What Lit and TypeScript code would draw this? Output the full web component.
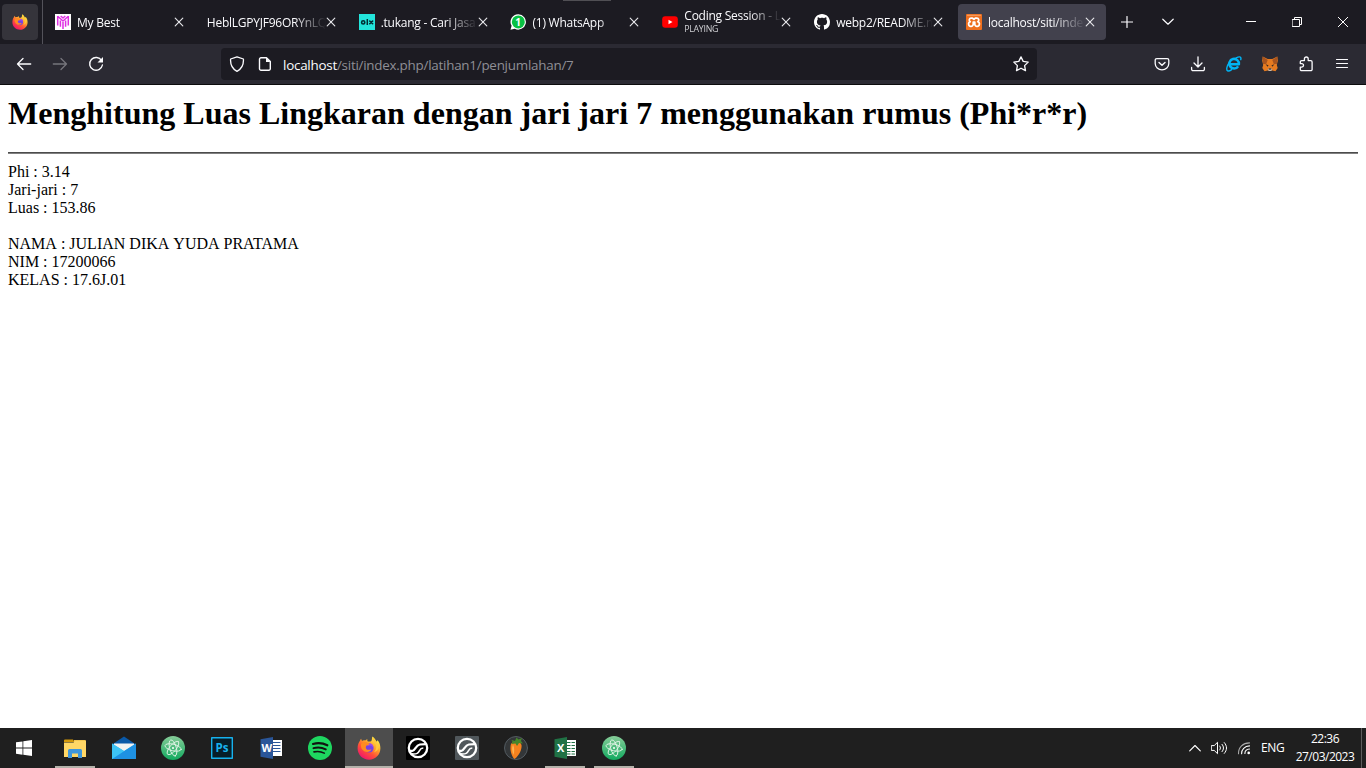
import { LitElement, html, svg, css, nothing, type TemplateResult } from "lit";
import { customElement } from "lit/decorators.js";
import { classMap } from "lit/directives/class-map.js";

const icon = (w: number, h: number, body: unknown, box = `0 0 ${w} ${h}`): TemplateResult =>
  html`<svg width=${w} height=${h} viewBox=${box} fill="none" stroke-linecap="round" stroke-linejoin="round">${body}</svg>`;

const firefox = (size: number, id: string) => icon(size, size, svg`
  <defs>
    <linearGradient id=${id} x1=".85" y1=".1" x2=".25" y2=".95">
      <stop offset="0" stop-color="#fff04a"/><stop offset=".35" stop-color="#ffa52b"/>
      <stop offset=".65" stop-color="#ff5038"/><stop offset="1" stop-color="#f0166b"/>
    </linearGradient>
  </defs>
  <path fill="url(#${id})" d="M15.5 .4c2.1 1.4 3.3 3.4 3.7 5.2 1-.2 1.2-.9 1.2-1.5 2.1 2.3 3 5.2 3 8.2 0 6.3-4.9 11.400-11.300 11.400S.600 18.700.600 12.500c0-3.200.900-5.900 2.500-7.900.200-.800.500-1.500 1-1.900l.900 2.300c1-.700 2-.800 3.100-.500l2.300-1.600c-.400 1-.100 2.100.700 2.700h2.300C15.500 4.500 14.500 2.500 15.500.4z"/>
  <circle cx="12" cy="12" r="4.600" fill="#7542e5"/>
  <path fill="#a04bea" d="M10 8c3-2 6.500 0 6.500 4-1-2-3-3-5-2z"/>
  <path fill="#ff8b22" d="M4 8c2-2 4-2.500 6-1.500l2.700 1.200c-.4 1.300-2 1.700-3.200 1.900-.700 1.200-1 2.100-.2 3.300 1.300 1.600 3.400.300 5.200.600-1 2.300-4.500 3.300-7.300 1.700C4.500 13.700 3.500 11 4 8z"/>
  <path fill="#ffc83a" d="M15.500 1c-.7 3 2.500 4.500 3.500 8 .8 3-.3 6-2.300 7.500C21 15 23 11 21.500 7.500l-1.200 1C19.700 5 17.500 3.500 15.500 1z"/>`, "0 0 24 24");

const atom = (id: string) => icon(24, 24, svg`
  <defs><linearGradient id=${id} x1="0" y1="0" x2="0" y2="1">
    <stop offset="0" stop-color="#86cc98"/><stop offset="1" stop-color="#12aa5f"/></linearGradient></defs>
  <circle cx="12" cy="12" r="12" fill="url(#${id})"/>
  <g stroke="#dff3e5" stroke-width=".9">
    <ellipse cx="12" cy="11.500" rx="8.300" ry="3.300" transform="rotate(14 12 12)"/>
    <ellipse cx="12" cy="12" rx="8.300" ry="3.300" transform="rotate(74 12 12)"/>
    <ellipse cx="12" cy="12" rx="8.300" ry="3.300" transform="rotate(-50 12 12)"/>
  </g><circle cx="12" cy="12" r="1" fill="#fff"/>`);

const swirl = (bg: string) => icon(24, 24, svg`
  <rect width="24" height="24" rx="1" fill=${bg}/>
  <circle cx="12" cy="12" r="9.200" stroke="#fff" stroke-width="2.300"/>
  <path d="M3.500 14.800h3c2.800 0 3.200-5.800 7.300-6.300l6.500-.3" stroke="#fff" stroke-width="2.200" stroke-linecap="butt"/>
  <path d="M6 17.900c5 .4 6.200-.8 7.500-3.300 1-1.900 1.800-2.500 3.800-2.600" stroke="#fff" stroke-width="1.600" stroke-linecap="butt"/>`);

const office = (colour: string, letter: string, rows: unknown) => icon(23, 22, svg`
  <path d="M11 3h11v16H11z" fill="#fff"/>${rows}
  <path d="M.500 2.200 13 0v22L.500 19.800z" fill=${colour}/>
  <text x="6.700" y="15" text-anchor="middle" font-family="Open Sans, sans-serif" font-weight="700" font-size="11" fill="#fff">${letter}</text>`);

const art = {
  back: () => icon(16, 16, svg`<path d="M14.700 8H1.500M7 2.500 1.500 8 7 13.500" stroke="#fbfbfe" stroke-width="1.300"/>`),
  forward: () => icon(16, 16, svg`<path d="M1.300 8h13.200M9 2.500 14.500 8 9 13.500" stroke="#76757c" stroke-width="1.300"/>`),
  reload: () => icon(16, 16, svg`<path d="M13.600 4.600A6.400 6.400 0 1 0 14.400 9" stroke="#fbfbfe" stroke-width="1.400"/><path d="M15 1v5.500H9.500z" fill="#fbfbfe"/>`),
  shield: () => icon(16, 16, svg`<path d="M8 .8 14.400 3c.4 5.600-1.600 9.800-6.400 12.300C3.200 12.800 1.200 8.600 1.600 3z" stroke="#fbfbfe" stroke-width="1.300"/>`),
  page: () => icon(14, 16, svg`<path d="M3 1.700h5.500l3.800 3.800v7.300a1.500 1.500 0 0 1-1.500 1.500H3a1.500 1.500 0 0 1-1.500-1.500V3.200A1.500 1.500 0 0 1 3 1.700z" stroke="#fbfbfe" stroke-width="1.400"/><path d="M8 1.500 12.500 6H8z" fill="#fbfbfe"/>`),
  star: () => icon(16, 16, svg`<path d="m8 .9 2.200 4.500 5 .700-3.600 3.500.9 5L8 12.200l-4.500 2.400.9-5L.8 6.100l5-.700z" stroke="#fbfbfe" stroke-width="1.300"/>`),
  pocket: () => icon(16, 16, svg`<path d="M2.800 2.600h10.400a1.600 1.600 0 0 1 1.600 1.600V7.500a6.800 6.300 0 0 1-13.600 0V4.200a1.600 1.600 0 0 1 1.600-1.600z" stroke="#fbfbfe" stroke-width="1.300"/><path d="M5 6.500 8 9.300l3-2.800" stroke="#fbfbfe" stroke-width="1.400"/>`),
  download: () => icon(16, 16, svg`<path d="M8 .8v10M4 7l4 4 4-4M1.600 11.500v1.700a1.500 1.500 0 0 0 1.500 1.500h9.800a1.500 1.500 0 0 0 1.500-1.500v-1.700" stroke="#fbfbfe" stroke-width="1.300"/>`),
  ie: () => icon(16, 16, svg`<path d="M12.900 11A5.100 5.100 0 1 1 13.700 8.800H5" stroke="#00b5f5" stroke-width="2.700" stroke-linecap="butt"/><path d="M10.500 2.300C14 .3 16.500.3 15.700 3.800M3.300 7C.6 11 .1 15 1.800 15.800c1 .4 2.800-.4 4.200-1.400" stroke="#00b5f5" stroke-width="1.500"/>`, "0 0 17 17"),
  fox: () => icon(16, 16, svg`<path d="m.7.5 5 2.600h4.600l5-2.600.5 4.300-1 4.200.9 3-2.200 3.200-3.200-.7H5.700l-3.200.7L.3 12l.9-3L.2 4.800z" fill="#e77b20"/><path d="m.7.500 5 3.600-1.500 4L1 8zM15.300.500l-5 3.600 1.500 4L15 8z" fill="#a8541f"/><path d="m3.500 8.300 3 1-.8 1.400zM12.500 8.300l-3 1 .8 1.400z" fill="#3a2a25"/><path d="m5.700 13.200 1-.8h2.600l1 .8-1 1.900H6.700z" fill="#c8bbb0"/><path d="M6.700 12.400h2.600v1.200H6.700z" fill="#2b2523"/>`),
  puzzle: () => icon(16, 16, svg`<path d="M3.600 4.600h2.800V2.900a1.900 1.900 0 0 1 3.800 0v1.700h2.600a1.300 1.300 0 0 1 1.300 1.300v7.500a1.300 1.300 0 0 1-1.300 1.300H3.600a1.300 1.300 0 0 1-1.300-1.300v-2.300h1.500a1.750 1.750 0 0 0 0-3.500H2.300V5.900a1.300 1.300 0 0 1 1.300-1.300z" stroke="#fbfbfe" stroke-width="1.300"/>`),
  menu: () => icon(14, 12, svg`<path d="M1.500 1.500h11M1.500 5.500h11M1.500 9.500h11" stroke="#fbfbfe" stroke-width="1.200"/>`),
  close: () => icon(10, 10, svg`<path d="m1.200 1.200 7.600 7.600m0-7.600L1.200 8.800" stroke="#e6e6ea" stroke-width="1.150"/>`),
  plus: () => icon(12, 12, svg`<path d="M6 .5v11M.5 6h11" stroke="#fbfbfe" stroke-width="1.200"/>`),
  chevron: () => icon(12, 8, svg`<path d="m.8 1.200 5.200 5 5.200-5" stroke="#fbfbfe" stroke-width="1.200"/>`),
  minimise: () => icon(10, 10, svg`<path d="M0 4.500h10" stroke="#fff" stroke-linecap="butt"/>`),
  restore: () => icon(10, 10, svg`<path d="M.5 2.500h7v7h-7zM2.500 2.500v-2h7v7h-2" stroke="#fff"/>`),
  quit: () => icon(10, 10, svg`<path d="m.3.300 9.400 9.400m0-9.400L.3 9.700" stroke="#fff" stroke-width="1"/>`),
  best: () => icon(16, 16, svg`<rect width="16" height="16" fill="#fff"/><path d="M2.700 2v9.500M13.300 2v9.500M5.400 6.500v6.300M10.600 6.500v6.300M8 8v7M2.700 2.300 8 7l5.300-4.700M5.700 2 8 4l2.300-2" stroke="#df2fe3" stroke-width="1.500" stroke-linecap="butt"/>`),
  olx: () => icon(16, 16, svg`<rect width="16" height="16" fill="#23e5db"/><circle cx="4.200" cy="8.400" r="1.600" stroke="#002f34" stroke-width="1.600"/><path d="M8.300 5v6" stroke="#002f34" stroke-width="1.500" stroke-linecap="butt"/><path d="m10.800 7.100 2.800 2.600m0-2.600-2.800 2.600" stroke="#002f34" stroke-width="1.600"/>`),
  whatsapp: () => icon(16, 16, svg`<path d="M8.300.2a7.700 7.700 0 1 1-3.500 14.600L.5 15.800l1.100-4A7.700 7.700 0 0 1 8.300.2z" fill="#fff"/><circle cx="8.300" cy="7.900" r="6.500" fill="#08c143"/><text x="8.100" y="11.600" text-anchor="middle" font-family="Open Sans, sans-serif" font-weight="700" font-size="10" fill="#fff">1</text>`),
  youtube: () => icon(16, 16, svg`<rect x=".2" y="2.300" width="15.600" height="11.400" rx="3" fill="#f00"/><path d="m6.500 5.700 4 2.300-4 2.300z" fill="#fff"/>`),
  github: () => icon(16, 16, svg`<path fill="#fff" d="M8 0C3.580 0 0 3.580 0 8c0 3.540 2.290 6.530 5.470 7.590.4.070.55-.17.55-.38 0-.19-.01-.82-.01-1.490-2.010.37-2.530-.49-2.690-.94-.09-.23-.48-.94-.82-1.130-.28-.15-.68-.52-.01-.53.63-.01 1.080.58 1.230.82.72 1.210 1.870.87 2.330.66.07-.52.28-.87.51-1.070-1.780-.2-3.640-.89-3.640-3.950 0-.87.31-1.590.82-2.150-.08-.2-.36-1.020.08-2.120 0 0 .67-.21 2.200.82.64-.18 1.320-.27 2-.27s1.360.09 2 .27c1.530-1.040 2.200-.82 2.200-.82.44 1.100.16 1.920.08 2.120.51.56.82 1.270.82 2.150 0 3.070-1.870 3.750-3.650 3.950.29.25.54.73.54 1.480 0 1.070-.01 1.930-.01 2.200 0 .21.15.46.55.38A8 8 0 0 0 16 8c0-4.420-3.580-8-8-8z"/>`),
  xampp: () => icon(16, 16, svg`<rect width="16" height="16" rx="1" fill="#ee6f1e"/><path d="M1.500 1.300h13" stroke="#f9b27c" stroke-width=".8"/><path d="M6.500 4.200H5.300a1.900 1.900 0 0 0-1 3.600 2.300 2.300 0 1 0 2.900 2.400V8h1.600v2.200a2.300 2.300 0 1 0 2.900-2.400 1.900 1.900 0 0 0-1-3.600H9.300L8 5.300z" stroke="#fff" stroke-width="1.700"/>`),
  windows: () => icon(16, 16, svg`<path fill="#fff" d="M0 2.300 6.500 1.400v6.200H0zM7.300 1.300 16 0v7.600H7.300zM0 8.400h6.500v6.300L0 13.800zM7.300 8.400H16V16l-8.700-1.200z"/>`),
  files: () => icon(22, 19, svg`<path d="M0 1.500A1 1 0 0 1 1 .500h8l1.500 2.500H0z" fill="#d59a0b"/><path d="M10 1h11a1 1 0 0 1 1 1v3H10z" fill="#f3c64f"/><path d="M0 3.500h9.500l1.500-1.500h11v16H0z" fill="#ffd766"/><path d="M4 19v-7.500A1.500 1.500 0 0 1 5.500 10h11a1.500 1.500 0 0 1 1.500 1.500V19h-4v-4.500H8V19z" fill="#3f96db"/>`),
  mail: () => icon(24, 24, svg`<path d="M0 8.500 12 .500l12 8V10H0z" fill="#0a59a8"/><path d="M2 7.500h20v9H2z" fill="#f2f2f2"/><path d="M0 7.500 12 15l12-7.500V23H0z" fill="#27b3f0"/><path d="M0 23 24 7.500V23z" fill="#1e91e3"/><path d="m0 7.500 12 7.500L0 23z" fill="#3cc3f5"/>`),
  photoshop: () => icon(22, 22, svg`<rect x=".700" y=".700" width="20.600" height="20.600" fill="#061e29" stroke="#17b2ee" stroke-width="1.400"/><text x="11" y="15" text-anchor="middle" font-family="Open Sans, sans-serif" font-size="12" font-weight="700" textLength="13" lengthAdjust="spacingAndGlyphs" fill="#17b2ee">Ps</text>`),
  word: () => office("#2a5699", "W", svg`<path d="M13 5.500h7M13 8.500h7M13 11.500h7M13 14.500h7" stroke="#2a5699" stroke-width="1.200"/>`),
  excel: () => office("#207245", "X", svg`<path d="M13 5.500h7.500M13 8.500h7.500M13 11.500h7.500M13 14.500h7.500M13 17h7.500" stroke="#207245" stroke-width="1.100"/><path d="M17 4v14" stroke="#fff"/>`),
  spotify: () => icon(24, 24, svg`<circle cx="12" cy="12" r="12" fill="#1ed760"/><path d="M5 8c5-1.400 10-.9 14.300 1.300" stroke="#111" stroke-width="2.200"/><path d="M5.500 12.200c4.500-1.200 8.500-.7 12.300 1.200" stroke="#111" stroke-width="1.900"/><path d="M6 15.900c3.800-.9 7-.5 10.300 1.200" stroke="#111" stroke-width="1.600"/>`),
  fruity: () => icon(24, 24, svg`<circle cx="12" cy="12" r="11.500" fill="#333638" stroke="#535b61"/><path d="M7 8c1.500-3.500 9.500-3.500 10.500 1C18.200 13 15 20 10.500 23 7 20 5.500 12.500 7 8z" fill="#f5821f"/><path d="M9 8.500c-1.500 3-1 7 .5 10.500 1-3 1-7.500-.5-10.500z" fill="#ffb450"/><path d="M7.500 4 11 5l1.500-3.500L14.500 3.500l3.500-1.500-1 3 2 2.500-4-.5-2 3-1.500-2.500-4 .5 1-2z" fill="#46852b"/>`),
  up: () => icon(12, 8, svg`<path d="m.7 6.800 5.300-5.300 5.300 5.300" stroke="#fff" stroke-width="1.150"/>`),
  sound: () => icon(17, 14, svg`<path d="M.7 4.600h2.500L6.500 1.300v11.400L3.200 9.400H.7z" stroke="#fff" stroke-linejoin="miter"/><path d="M8.700 5c1 1.200 1 2.800 0 4M11 3.300c2 2.300 2 5.100 0 7.400M13.300 1.600c3 3.500 3 7.300 0 10.800" stroke="#fff" stroke-width="1"/>`),
  wifi: () => icon(14, 14, svg`<circle cx="11.700" cy="11.900" r="1.300" fill="#fff"/><path d="M7.900 12.500c0-2.400 1.700-4.300 4.600-4.500M4.600 12.700C4.400 8.500 7.700 5 12.500 4.900" stroke="#fff" stroke-width="1.100"/><path d="M1.500 12.700C1.300 6.300 6 2 12.500 1.900" stroke="#aaa" stroke-width="1.100"/>`),
};

interface Tab { icon?: () => TemplateResult; title: string; sub?: string; active?: boolean }

const tabs: Tab[] = [
  { icon: art.best, title: "My Best" },
  { title: "HeblLGPYJF96ORYnLQ" },
  { icon: art.olx, title: ".tukang - Cari Jasa" },
  { icon: art.whatsapp, title: "(1) WhatsApp" },
  { icon: art.youtube, title: "Coding Session - L", sub: "PLAYING" },
  { icon: art.github, title: "webp2/README.m" },
  { icon: art.xampp, title: "localhost/siti/inde", active: true },
];

@customElement("browser-chrome")
class BrowserChrome extends LitElement {
  static styles = css`
    :host { display: block; font-family: "Open Sans", sans-serif; color: #fbfbfe; }
    svg { display: block; flex: none; }
    .strip { height: 44px; background: #1c1b22; display: flex; align-items: center; position: relative; }
    .drag { position: absolute; top: 0; left: 563px; width: 48px; height: 1px; background: #504f54; }
    .pinned { width: 36px; height: 36px; margin-left: 2px; border-radius: 4px; background: #35343b; display: grid; place-items: center; }
    .rule { width: 1px; height: 44px; margin: 0 4px; background: #53525a; }
    .tabs { display: flex; width: 1062.800px; }
    .tab { flex: 1; min-width: 0; padding-right: 3.830px; }
    .face { height: 36px; border-radius: 4px; display: flex; align-items: center; padding: 0 11px 0 8px; }
    .face.active { background: #42414d; }
    .face svg + .label { margin-left: 6px; }
    .label { flex: 1; min-width: 0; overflow: hidden; white-space: nowrap; font-size: 12px; line-height: 17px; letter-spacing: -.24px; padding-top: 1px; -webkit-mask-image: linear-gradient(to left, transparent, #000 32px); }
    .sub { font-size: 8.800px; line-height: 11px; letter-spacing: -.3px; color: #d0d0d4; }
    .label.two { padding-top: 0; margin-top: -2px; line-height: 16px; }
    .label.two .sub { line-height: 11px; }
    .new { width: 35px; display: grid; place-items: center; }
    .list { width: 46px; display: grid; place-items: center; }
    .windowing { margin-left: auto; display: flex; }
    .windowing span { width: 46px; display: grid; place-items: center; }
    .bar { height: 40px; background: #2b2a33; display: flex; align-items: center; border-bottom: 1px solid #0c0c0d; }
    .nav { display: flex; gap: 20px; padding-left: 16px; width: 205px; }
    .url { width: 816px; height: 32px; border-radius: 4px; background: #1c1b22; display: flex; align-items: center; padding: 0 8px; box-sizing: border-box; }
    .url .page { margin-left: 13px; }
    .address { flex: 1; margin-left: 11px; padding-top: 2px; font-size: 13.400px; line-height: 20px; color: #8f8f96; white-space: nowrap; letter-spacing: -.24px; }
    .address b { font-weight: 400; color: #fbfbfe; }
    .tools { margin-left: auto; margin-right: 17px; display: flex; align-items: center; gap: 20px; }
    .tools svg:last-child { margin-left: 1px; }
  `;
  render() {
    return html`
      <div class="strip">
        <div class="drag"></div>
        <div class="pinned">${firefox(16, "foxTab")}</div>
        <div class="rule"></div>
        <div class="tabs">
          ${tabs.map((t) => html`<div class="tab"><div class=${classMap({ face: true, active: !!t.active })}>
            ${t.icon ? t.icon() : nothing}
            <div class=${classMap({ label: true, two: !!t.sub })}>${t.title}${t.sub ? html`<div class="sub">${t.sub}</div>` : nothing}</div>
            ${art.close()}
          </div></div>`)}
        </div>
        <div class="new">${art.plus()}</div>
        <div class="list">${art.chevron()}</div>
        <div class="windowing"><span>${art.minimise()}</span><span>${art.restore()}</span><span>${art.quit()}</span></div>
      </div>
      <div class="bar">
        <div class="nav">${art.back()}${art.forward()}${art.reload()}</div>
        <div class="url">${art.shield()}<span class="page">${art.page()}</span>
          <div class="address"><b>localhost</b>/siti/index.php/latihan1/penjumlahan/7</div>${art.star()}</div>
        <div class="tools">${art.pocket()}${art.download()}${art.ie()}${art.fox()}${art.puzzle()}${art.menu()}</div>
      </div>`;
  }
}

@customElement("result-page")
class ResultPage extends LitElement {
  static styles = css`
    :host { display: block; background: #fff; color: #000; font: 16px/18px "Liberation Serif", "Times New Roman", serif; font-kerning: none; padding: 10px 8px 0; }
    .title { margin: 0; font-size: 32px; line-height: 37px; font-weight: 700; white-space: nowrap; letter-spacing: .012px; }
    .divider { height: 2px; box-sizing: border-box; border-top: 1px solid #4c4c4c; background: #808080; margin: 20px 0 9px; }
    .row { height: 18px; white-space: nowrap; }
    .kerned { font-kerning: normal; }
    .group + .group { margin-top: 18px; }
  `;
  render() {
    const groups = [
      ["Phi : 3.14", "Jari-jari : 7", "Luas : 153.86"],
      [html`NAMA : JULIAN DIKA YUDA <span class="kerned">PRATAMA</span>`, "NIM : 17200066", "KELAS : 17.6J.01"],
    ];
    return html`
      <h1 class="title">Menghitung Luas Lingkaran dengan jari jari 7 menggunakan rumus (Phi*r*r)</h1>
      <div class="divider"></div>
      ${groups.map((g) => html`<div class="group">${g.map((r) => html`<div class="row">${r}</div>`)}</div>`)}`;
  }
}

@customElement("task-bar")
class TaskBar extends LitElement {
  static styles = css`
    :host { display: flex; height: 40px; background: #1f1f1f; color: #fff; font: 12px/18px "Open Sans", sans-serif; }
    svg { display: block; }
    .start { width: 48px; margin-right: 3px; display: grid; place-items: center; }
    .apps { display: flex; gap: 1px; }
    .app { width: 48px; height: 40px; display: grid; place-items: center; position: relative; }
    .app.focus { background: #4d4d4d; }
    .app.open::after { content: ""; position: absolute; left: 4px; right: 4px; bottom: 0; height: 2px; background: #b4b2aa; }
    .app.focus::after { left: 0; right: 0; }
    .tray { margin-left: auto; display: flex; align-items: center; }
    .sound { margin-left: 10px; }
    .wifi { margin-left: 9px; }
    .lang { margin-left: 10px; width: 24px; letter-spacing: -.3px; }
    .clock { margin-left: 7px; width: 66px; text-align: center; letter-spacing: -.5px; }
    .peek { width: 1px; height: 40px; margin: 0 4px 0 3px; background: #5c5c5c; }
  `;
  render() {
    const apps: [() => TemplateResult, boolean?, boolean?][] = [
      [art.files, true], [art.mail], [() => atom("atomFirst")], [art.photoshop], [art.word], [art.spotify],
      [() => firefox(24, "foxTask"), true, true], [() => swirl("#000")], [() => swirl("#50575b")],
      [art.fruity], [art.excel, true], [() => atom("atomSecond"), true],
    ];
    return html`
      <div class="start">${art.windows()}</div>
      <div class="apps">${apps.map(([draw, open, focus]) => html`<div class=${classMap({ app: true, open: !!open, focus: !!focus })}>${draw()}</div>`)}</div>
      <div class="tray">
        ${art.up()}<span class="sound">${art.sound()}</span><span class="wifi">${art.wifi()}</span>
        <span class="lang">ENG</span>
        <div class="clock"><div>22:36</div><div>27/03/2023</div></div>
        <div class="peek"></div>
      </div>`;
  }
}

@customElement("app-root")
class AppRoot extends LitElement {
  static styles = css`
    :host { display: flex; flex-direction: column; width: 1366px; height: 768px; overflow: hidden; background: #fff; }
    .page { flex: 1; }
  `;
  render() {
    return html`<browser-chrome></browser-chrome><result-page class="page"></result-page><task-bar></task-bar>`;
  }
}
